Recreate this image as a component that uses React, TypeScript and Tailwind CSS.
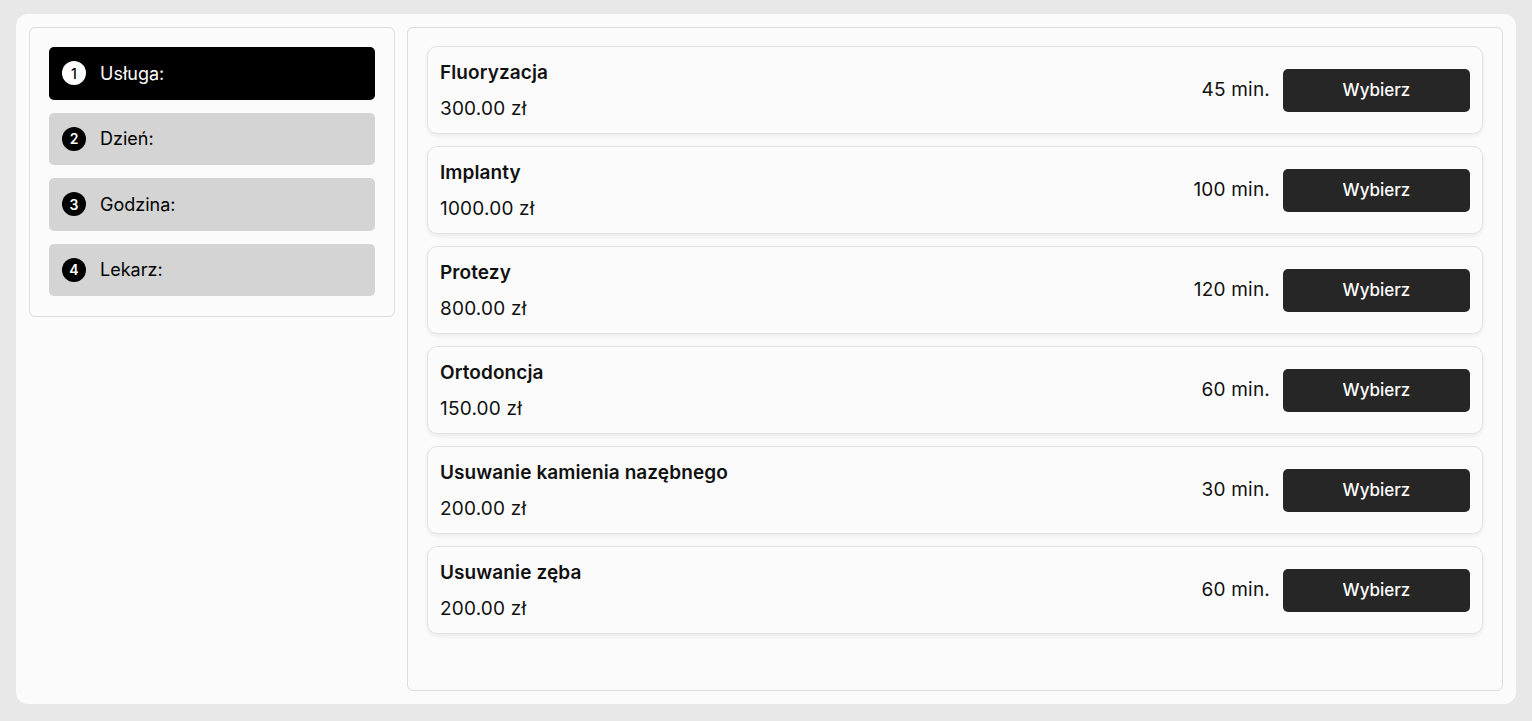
import React from "react";

const steps = [
    { n: 1, label: "Usługa:", active: true },
    { n: 2, label: "Dzień:", active: false },
    { n: 3, label: "Godzina:", active: false },
    { n: 4, label: "Lekarz:", active: false },
];

const services = [
    { name: "Fluoryzacja", price: "300.00 zł", time: "45 min." },
    { name: "Implanty", price: "1000.00 zł", time: "100 min." },
    { name: "Protezy", price: "800.00 zł", time: "120 min." },
    { name: "Ortodoncja", price: "150.00 zł", time: "60 min." },
    { name: "Usuwanie kamienia nazębnego", price: "200.00 zł", time: "30 min." },
    { name: "Usuwanie zęba", price: "200.00 zł", time: "60 min." },
];

function StepItem({ n, label, active }: { n: number; label: string; active: boolean }) {
    return (
        <div
            className={
                active
                    ? "h-[52.5px] rounded-[5px] bg-black text-white flex items-center pl-[13px] gap-[14px]"
                    : "h-[52.5px] rounded-[5px] bg-[#d4d4d4] text-black flex items-center pl-[13px] gap-[14px]"
            }
        >
            <span
                className={
                    active
                        ? "w-6 h-6 rounded-full bg-white text-black flex items-center justify-center text-[14px] font-medium"
                        : "w-6 h-6 rounded-full bg-black text-white flex items-center justify-center text-[14px] font-semibold"
                }
            >
                {n}
            </span>
            <span className="text-[18px]">{label}</span>
        </div>
    );
}

function ServiceCard({ name, price, time }: { name: string; price: string; time: string }) {
    return (
        <div className="h-[88px] rounded-[10px] border border-[#e2e2e2] bg-[#fbfbfb] shadow-[0_2px_5px_rgba(0,0,0,0.07)] flex items-center justify-between pl-3 pr-3">
            <div className="flex flex-col gap-2 pt-[2px]">
                <div className="text-[19px] leading-[28px] font-semibold text-[#111] tracking-[0.1px]">{name}</div>
                <div className="text-[19px] leading-[28px] text-[#111] tracking-[0.2px]">{price}</div>
            </div>
            <div className="flex items-center gap-[13px]">
                <span className="text-[19px] text-[#111] tracking-[0.2px]">{time}</span>
                <button className="w-[187px] h-[43px] rounded-[5px] bg-[#262626] text-white text-[17px] font-medium pt-[2px]">
                    Wybierz
                </button>
            </div>
        </div>
    );
}

export default function App() {
    return (
        <div className="min-h-[721px] bg-[#e8e8e8] px-4 pt-[14px] pb-[17px]" style={{ fontFamily: "Inter, 'Noto Sans', sans-serif" }}>
            <div className="bg-[#fbfbfb] rounded-[12px] p-[13px] flex gap-3 items-start">
                <div className="w-[366px] shrink-0 border border-[#dddddd] rounded-[6px] bg-[#fbfbfb] px-[19px] pt-[19px] pb-[20px] flex flex-col gap-[13px]">
                    {steps.map((s) => (
                        <StepItem key={s.n} {...s} />
                    ))}
                </div>
                <div className="flex-1 h-[664px] border border-[#dddddd] rounded-[6px] bg-[#fbfbfb] px-[19px] pt-[18px] flex flex-col gap-3">
                    {services.map((s) => (
                        <ServiceCard key={s.name} {...s} />
                    ))}
                </div>
            </div>
        </div>
    );
}
